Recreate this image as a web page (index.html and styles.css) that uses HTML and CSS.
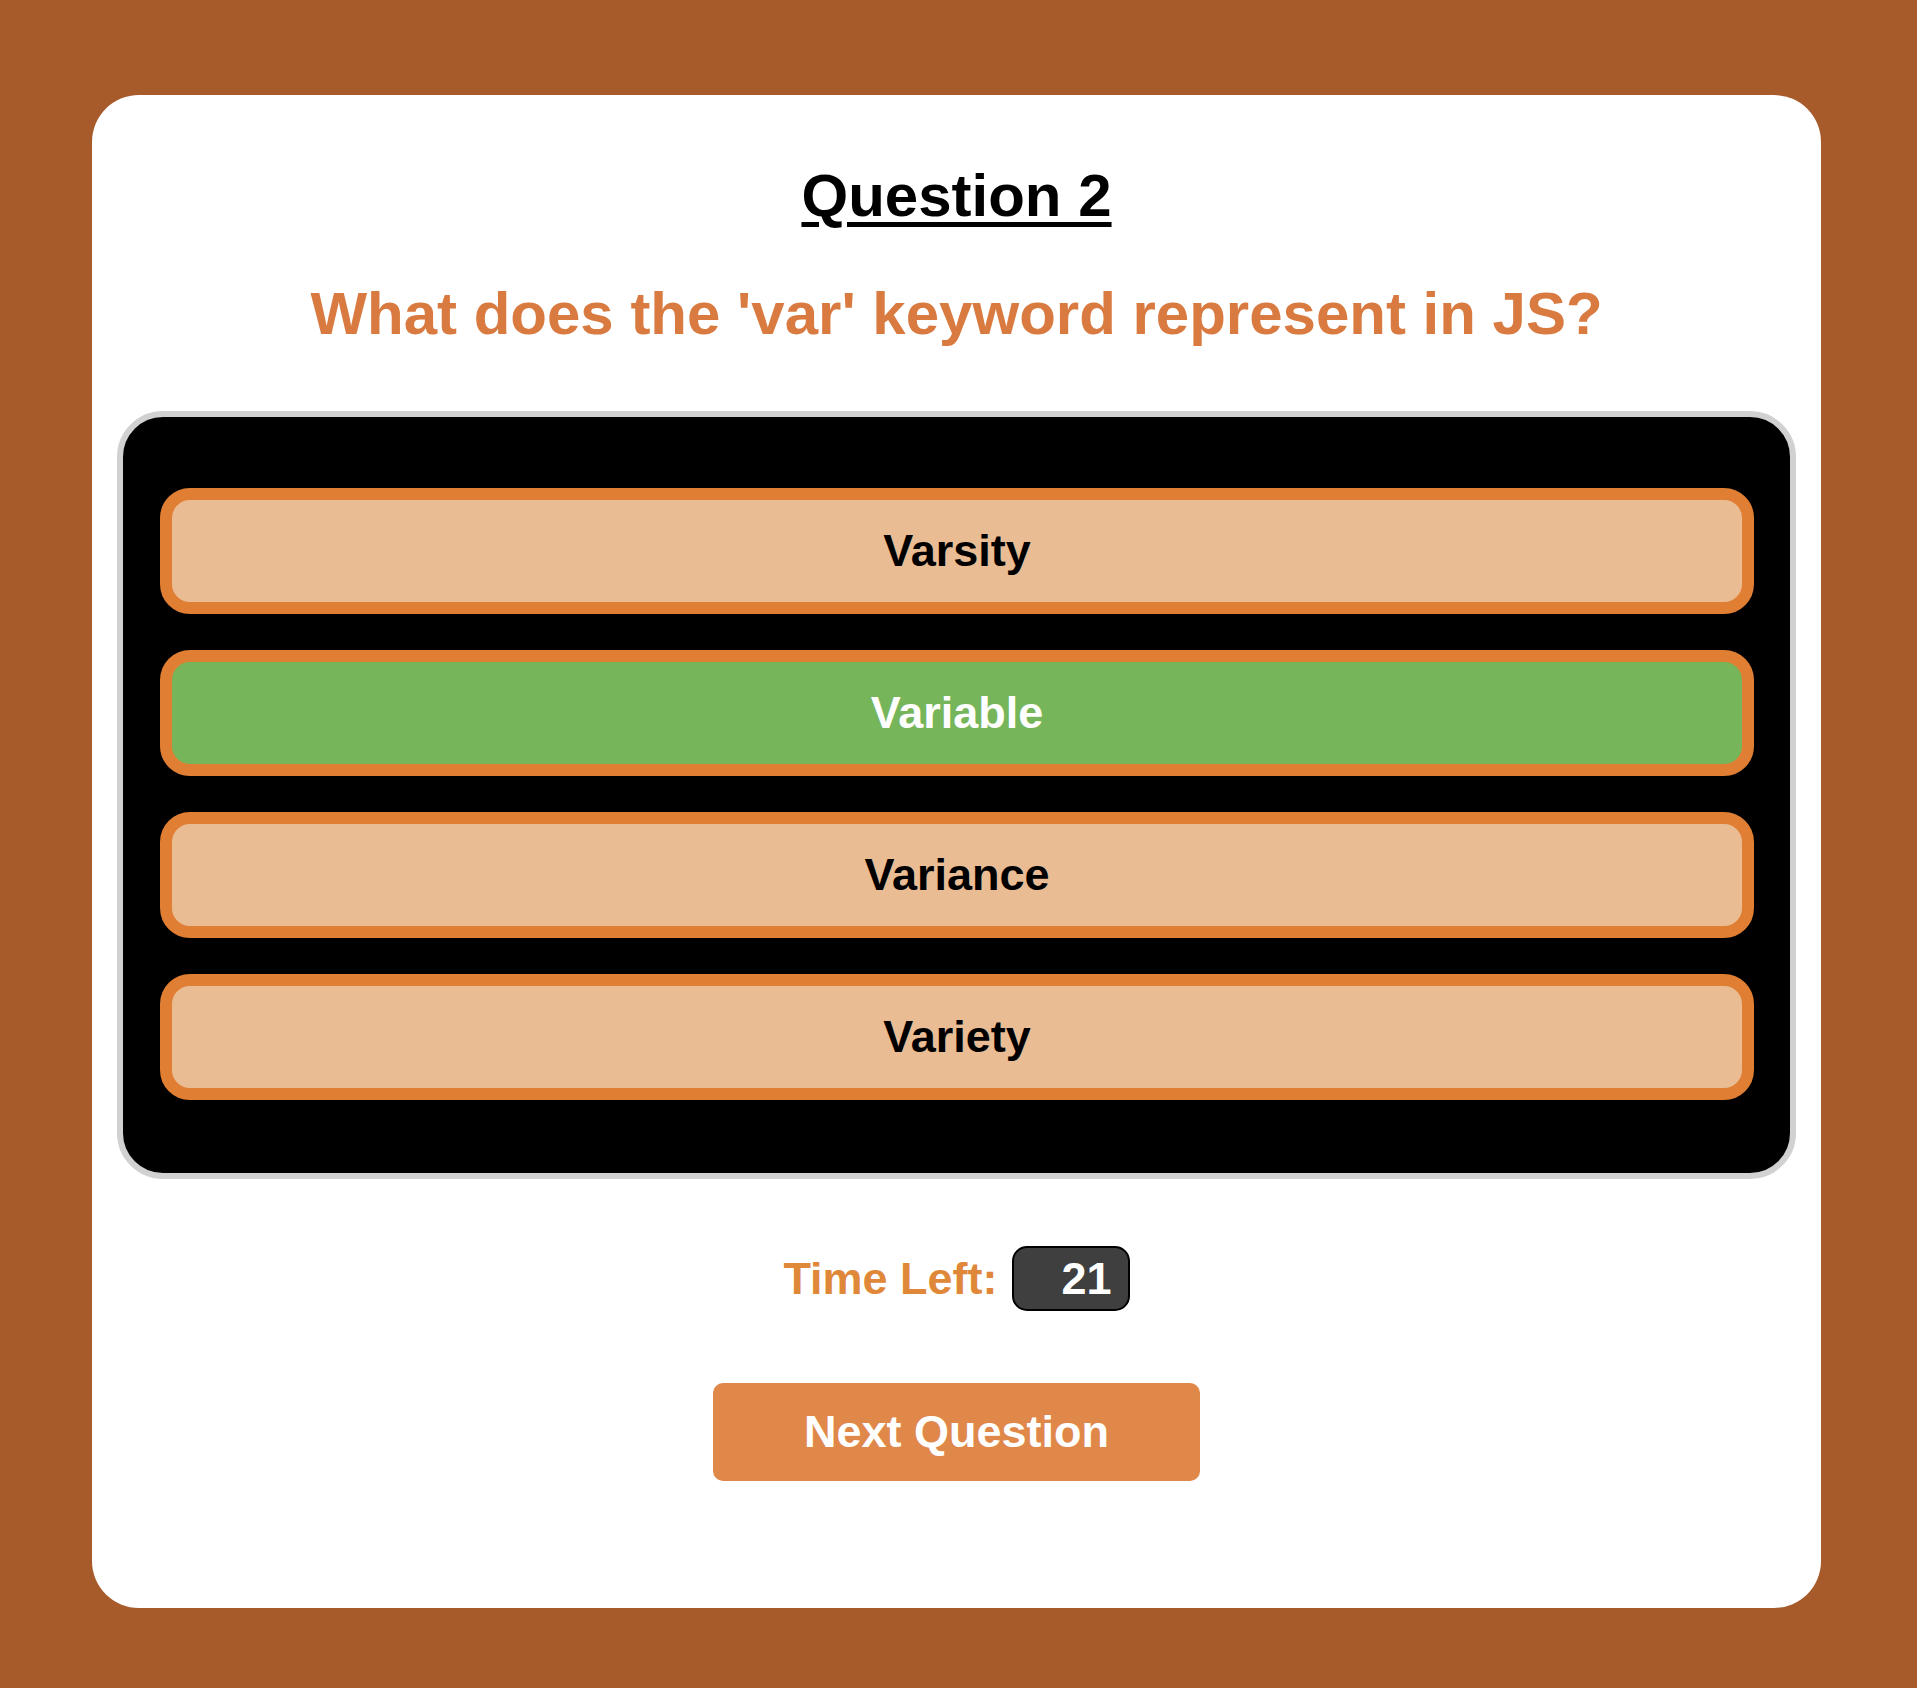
FILE: index.html
```html
<!DOCTYPE html>
<html lang="en">
<head>
<meta charset="utf-8">
<title>Quiz</title>
<link rel="stylesheet" href="styles.css">
</head>
<body>
<main class="card">
  <h1 class="heading">Question 2</h1>
  <h2 class="question">What does the 'var' keyword represent in JS?</h2>
  <div class="answers">
    <button class="option">Varsity</button>
    <button class="option correct">Variable</button>
    <button class="option">Variance</button>
    <button class="option">Variety</button>
  </div>
  <div class="timer">Time Left: <span class="timer-value">21</span></div>
  <button class="next">Next Question</button>
</main>
</body>
</html>
```
FILE: styles.css
```css
html, body {
  margin: 0;
  padding: 0;
}
body {
  background: #a75b2b;
  font-family: "Liberation Sans", Arial, sans-serif;
  min-height: 1688px;
  box-sizing: border-box;
  padding: 95px 0 0 92px;
}
.card {
  width: 1729px;
  box-sizing: border-box;
  background: #ffffff;
  border-radius: 47px;
  padding: 66px 25px 127px;
  display: flex;
  flex-direction: column;
  align-items: center;
}
.heading {
  margin: 0;
  font-size: 60px;
  font-weight: bold;
  color: #000;
  text-decoration: underline;
  text-underline-offset: 6px;
  text-decoration-thickness: 5px;
  line-height: 69px;
}
.question {
  margin: 49px 0 0;
  font-size: 60px;
  font-weight: bold;
  color: #d97a40;
  line-height: 69px;
}
.answers {
  margin-top: 63px;
  align-self: stretch;
  background: #000;
  border: 6px solid #d1d1d1;
  border-radius: 46px;
  padding: 71px 36px 73px 37px;
  display: flex;
  flex-direction: column;
  gap: 36px;
}
.option {
  height: 126px;
  box-sizing: border-box;
  border: 12px solid #e07e33;
  border-radius: 30px;
  background: #eabc94;
  color: #000;
  font-family: "Liberation Sans", Arial, sans-serif;
  font-size: 45px;
  font-weight: bold;
  padding: 0;
  cursor: pointer;
}
.option.correct {
  background: #77b55b;
  color: #fff;
}
.timer {
  margin-top: 67px;
  height: 65px;
  display: flex;
  align-items: center;
  gap: 14px;
  font-size: 45px;
  font-weight: bold;
  color: #e0883a;
}
.timer-value {
  box-sizing: border-box;
  width: 118px;
  height: 65px;
  display: flex;
  align-items: center;
  justify-content: flex-end;
  padding-right: 16px;
  background: #3f3f3f;
  border: 2px solid #000;
  border-radius: 15px;
  color: #fff;
}
.next {
  margin-top: 72px;
  width: 487px;
  height: 98px;
  border: none;
  border-radius: 10px;
  background: #e0874a;
  color: #fff;
  font-family: "Liberation Sans", Arial, sans-serif;
  font-size: 45px;
  font-weight: bold;
  cursor: pointer;
}
```
